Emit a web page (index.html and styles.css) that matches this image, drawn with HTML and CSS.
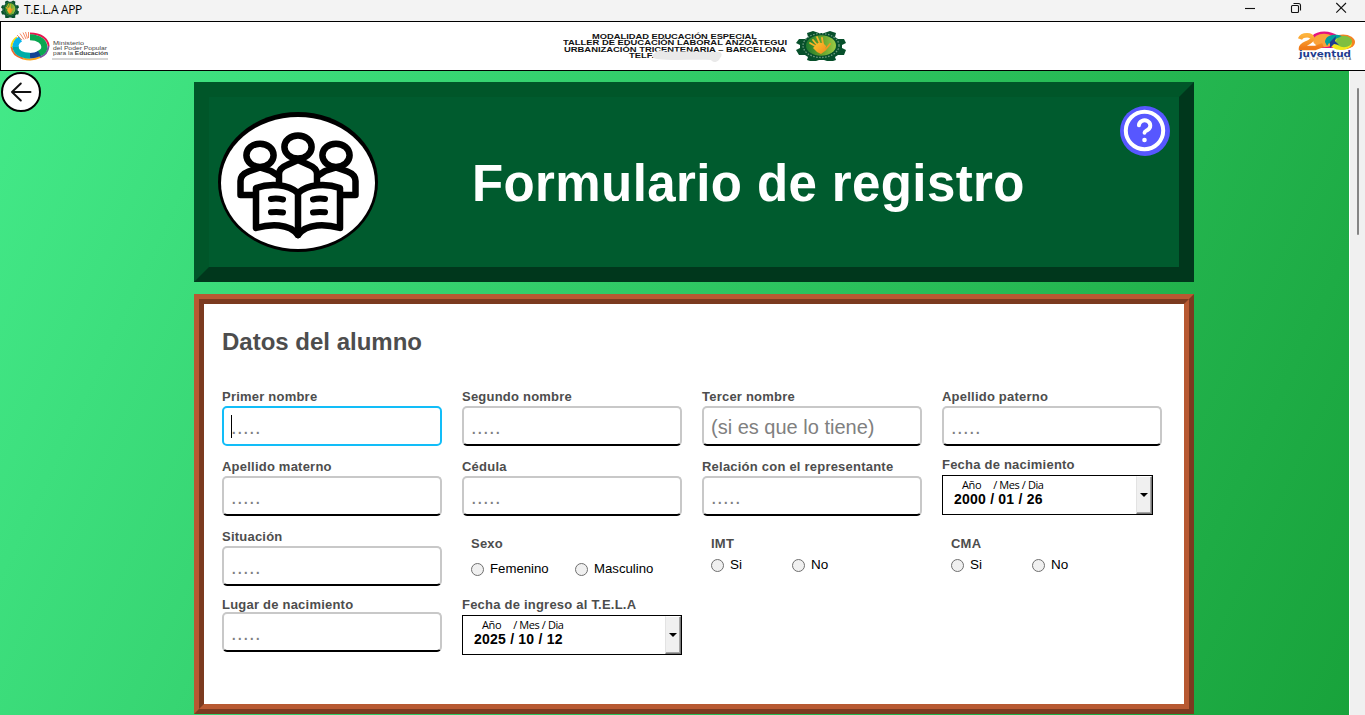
FILE: index.html
```html
<!DOCTYPE html>
<html lang="es">
<head>
<meta charset="utf-8">
<title>T.E.L.A APP</title>
<link rel="stylesheet" href="styles.css">
</head>
<body>
<svg width="0" height="0" class="defs">
  <defs>
    <linearGradient id="gearCore" x1="0" y1="0" x2="1" y2="0"><stop offset="0" stop-color="#1d7a2e"/><stop offset=".5" stop-color="#5f9f2c"/><stop offset="1" stop-color="#9ccb45"/></linearGradient>
    <linearGradient id="handFill" x1="0" y1="0" x2="1" y2="1"><stop offset="0" stop-color="#ffc52d"/><stop offset="1" stop-color="#f08a1d"/></linearGradient>
    <linearGradient id="twoFill" x1="0" y1="0" x2="0" y2="1"><stop offset="0" stop-color="#fdb33c"/><stop offset="1" stop-color="#f07a18"/></linearGradient>
    <symbol id="gear" viewBox="0 0 50 31" preserveAspectRatio="none">
      <path fill="#07502b" d="M17 1l6 2h5l6-2 6 2-1 4 3 2h6l2 4-4 2v3l4 2-2 5h-6l-3 2 1 3-6 2-6-2h-5l-6 2-6-2 1-3-3-2H3l-3-5 4-2v-3l-4-2 3-4h6l3-2-1-4z"/>
      <ellipse cx="25" cy="15.500" rx="18" ry="12" fill="none" stroke="#d9e8dc" stroke-width="1.300" stroke-dasharray="1.500 1.500" stroke-opacity=".5"/>
      <ellipse cx="25" cy="15.500" rx="15" ry="10.300" fill="url(#gearCore)"/>
      <path fill="none" stroke="url(#handFill)" stroke-width="1.800" stroke-linecap="round" d="M21 17l-7-4M22 16l-5-6M24 14l-3-7M27 14l-1-6M29 20l5-6"/>
      <path fill="url(#handFill)" d="M19 16l3-3 5 0 3 3-1 5-4 3-4-2-4-4z"/>
    </symbol>
  </defs>
</svg>

<header class="titlebar">
  <svg class="titlebar-icon" width="18" height="18"><use href="#gear" width="18" height="18"/></svg>
  <span class="titlebar-name">T.E.L.A APP</span>
  <div class="window-buttons">
    <svg width="12" height="12" viewBox="0 0 12 12"><path d="M1 6.500h10"/></svg>
    <svg width="12" height="12" viewBox="0 0 12 12"><rect x="1.500" y="3.500" width="7" height="7" rx="1"/><path d="M3.500 1.500h5a2 2 0 0 1 2 2v5"/></svg>
    <svg width="12" height="12" viewBox="0 0 12 12"><path d="M1.300 1l9.700 9.700M11 1L1.300 10.700"/></svg>
  </div>
</header>

<div class="brandbar">
  <svg class="ministry" width="100" height="32" viewBox="0 0 100 32">
    <g fill="none">
      <path stroke="#e6174f" stroke-width="2" d="M20 2.600C31 2.600 38 8 38.600 15"/>
      <path stroke="#7c52a0" stroke-width="2" d="M38.600 15C38 20 35 24.500 30 26.200"/>
      <path stroke="#f9a51b" stroke-width="2" d="M30 26.200C25 28.700 18 28.700 13 27.500"/>
      <path stroke="#ef6b2e" stroke-width="2" d="M13 27.500C6 25.500 2 21 1.500 16"/>
      <path stroke="#f5dc14" stroke-width="2" d="M1.500 16C1.500 12 4 8 7 6.500"/>
      <path stroke="#0aa651" stroke-width="6" d="M20 6.200C29 6.200 34 11 34.300 15.500S31 22 28 23"/>
      <path stroke="#124494" stroke-width="5.500" d="M29.500 22.500C26 24.300 23 24.700 20 24.800"/>
      <path stroke="#00ada7" stroke-width="6" d="M20 24.700C11 24.700 5.500 21 5.500 15"/>
      <path stroke="#08b5ea" stroke-width="6" d="M5.500 16C5.500 12 7 10 10.500 8"/>
      <path stroke="#f26a3d" stroke-width=".8" d="M7 4l5 5M10 2.500l4 6M13 1.500l3 6.500M15.500 1l2 6.500M18.500 1v6"/>
    </g>
    <g class="ministry-text">
      <text x="43" y="14" textLength="31" lengthAdjust="spacingAndGlyphs">Ministerio</text>
      <text x="43" y="19" textLength="54" lengthAdjust="spacingAndGlyphs">del Poder Popular</text>
      <text x="43" y="24" textLength="55" lengthAdjust="spacingAndGlyphs">para la <tspan class="strong">Educación</tspan></text>
    </g>
    <path d="M42 28h56" stroke="#999" stroke-width=".8"/>
  </svg>
  <div class="school">
    <svg width="226" height="32" viewBox="0 0 226 32" class="school-text">
      <text x="29" y="8.500" textLength="165" lengthAdjust="spacingAndGlyphs">MODALIDAD EDUCACIÓN ESPECIAL</text>
      <text x="0" y="15.200" textLength="224" lengthAdjust="spacingAndGlyphs">TALLER DE EDUCACIÓN LABORAL ANZOÁTEGUI</text>
      <text x="1" y="21.500" textLength="222" lengthAdjust="spacingAndGlyphs">URBANIZACIÓN TRICENTENARIA – BARCELONA</text>
      <text x="66" y="28.200" textLength="25" lengthAdjust="spacingAndGlyphs">TELF.</text>
      <path fill="#e9e9e9" d="M92 23c3-3 7-3 11-1 16-1 34 0 50 0 6-1 7 3 4 6-2 5-7 5-9 2-18-1-37 1-54-1-6-1-6-4-2-6z"/>
    </svg>
    <svg width="50" height="31"><use href="#gear" width="50" height="31"/></svg>
  </div>
  <svg class="juventud" width="60" height="30" viewBox="0 0 60 30">
    <path fill="#e5137f" d="M15 5C20-1 34-1 41 5l-4 12H22z"/>
    <ellipse cx="27" cy="9.500" rx="11" ry="6.800" fill="#faa33a"/>
    <path fill="none" stroke="url(#twoFill)" stroke-width="4.500" d="M3 8C5 3 16 3 15 8c-1 4-11 5-11 9h14l8-3"/>
    <ellipse cx="46" cy="11" rx="12" ry="7.500" fill="#f58220"/>
    <ellipse cx="44" cy="12" rx="11" ry="7" fill="#f3e91c"/>
    <ellipse cx="47" cy="10.500" rx="8" ry="5.800" fill="#80bf40"/>
    <path fill="#009f9c" d="M28 11c0-7 10-9 17-6l-6 3-4 6-3-2-2 3z"/>
    <path fill="#203b8e" d="M33 11l3-3 3-3-1 5 4 4-5-1-4 4z"/>
    <text class="juventud-name" x="2" y="25.500" textLength="52" lengthAdjust="spacingAndGlyphs">juventud</text>
    <text class="juventud-sub" x="8" y="28.600" textLength="46">BICENTENARIA</text>
  </svg>
</div>

<div class="viewport">
  <button class="back" aria-label="Volver">
    <svg width="36" height="36" viewBox="0 0 36 36"><path d="M27.500 18H9M17.800 9.500L9 18l8.800 8.500"/></svg>
  </button>
  <main class="page">
    <section class="banner">
      <svg class="banner-logo" width="160" height="140" viewBox="0 0 160 140">
        <ellipse cx="80" cy="70" rx="80" ry="70" fill="#000"/>
        <ellipse cx="80" cy="71" rx="77" ry="66" fill="#fff"/>
        <g fill="none" stroke="#000" stroke-width="6.500" stroke-linejoin="round" stroke-linecap="round">
          <path d="M35 83H22.500V69c0-5 3-7.500 8-9.500L42 55.500 53 59l6 4M125 83h12.500V69c0-5-3-7.500-8-9.500L118 55.500 107 59l-6 4"/>
          <ellipse cx="42" cy="43.300" rx="13.600" ry="11.600"/>
          <ellipse cx="118" cy="43.300" rx="13.600" ry="11.600"/>
          <path fill="#fff" d="M61 74V62c0-4 3-7 8-9l11-5 11 5c5 2 8 5 8 9v12"/>
          <ellipse cx="80" cy="35" rx="13.600" ry="11.600"/>
          <path fill="#fff" d="M38 76c14-5 32-4 42 5 10-9 28-10 42-5v40c-14-4-33-5-42 7-9-12-28-11-42-7z"/>
          <path d="M80 81v42"/>
          <path stroke-width="6" d="M53 87q6-1 12 .5M53 100.300q6-.8 12 .2M95 87.500q6-1.500 12-.5M95 100.500q6-1 12-.2"/>
        </g>
      </svg>
      <h1 class="banner-title">Formulario de registro</h1>
      <svg class="help" width="50" height="50" viewBox="0 0 50 50">
        <circle cx="25" cy="25" r="25" fill="#5757ff"/>
        <circle cx="24.500" cy="24.500" r="18.700" fill="none" stroke="#fff" stroke-width="4"/>
        <path d="M18.900 19.400a5.700 5.200 0 1 1 8.700 4.600c-2 1.200-3.100 1.300-3.100 2.700" fill="none" stroke="#fff" stroke-width="3.900" stroke-linecap="round"/>
        <circle cx="24.500" cy="34" r="2.300" fill="#fff"/>
      </svg>
    </section>

    <section class="frame">
      <form class="panel">
        <h2 class="panel-title">Datos del alumno</h2>
        <div class="fields">
          <label class="field"><span class="caption">Primer nombre</span><span class="box focused"><i class="caret"></i><span class="dots">.....</span></span></label>
          <label class="field"><span class="caption">Segundo nombre</span><span class="box"><span class="dots">.....</span></span></label>
          <label class="field"><span class="caption">Tercer nombre</span><span class="box">(si es que lo tiene)</span></label>
          <label class="field"><span class="caption">Apellido paterno</span><span class="box"><span class="dots">.....</span></span></label>

          <label class="field"><span class="caption">Apellido materno</span><span class="box"><span class="dots">.....</span></span></label>
          <label class="field"><span class="caption">Cédula</span><span class="box"><span class="dots">.....</span></span></label>
          <label class="field"><span class="caption">Relación con el representante</span><span class="box"><span class="dots">.....</span></span></label>
          <div class="field raised"><span class="caption">Fecha de nacimiento</span>
            <div class="date narrow"><div class="date-text"><span class="date-head"><span>Año</span><span>/ Mes / Dia</span></span><b>2000 / 01 / 26</b></div><span class="drop"></span></div>
          </div>

          <label class="field"><span class="caption">Situación</span><span class="box"><span class="dots">.....</span></span></label>
          <div class="field choice sex"><span class="caption">Sexo</span><div class="options"><label><i class="radio"></i>Femenino</label><label><i class="radio"></i>Masculino</label></div></div>
          <div class="field choice"><span class="caption">IMT</span><div class="options"><label><i class="radio"></i>Si</label><label><i class="radio"></i>No</label></div></div>
          <div class="field choice"><span class="caption">CMA</span><div class="options"><label><i class="radio"></i>Si</label><label><i class="radio"></i>No</label></div></div>

          <label class="field birthplace"><span class="caption">Lugar de nacimiento</span><span class="box"><span class="dots">.....</span></span></label>
          <div class="field raised"><span class="caption">Fecha de ingreso al T.E.L.A</span>
            <div class="date"><div class="date-text"><span class="date-head"><span>Año</span><span>/ Mes / Dia</span></span><b>2025 / 10 / 12</b></div><span class="drop"></span></div>
          </div>
        </div>
      </form>
    </section>
  </main>
  <div class="scrollbar"><div class="thumb"></div></div>
</div>
</body>
</html>
```

FILE: styles.css
```css
* { box-sizing: border-box; }
body {
  margin: 0;
  width: 1365px;
  height: 715px;
  overflow: hidden;
  display: flex;
  flex-direction: column;
  font-family: "Liberation Sans", Arial, sans-serif;
  color: #000;
}
.defs { position: absolute; }

.titlebar {
  flex: none;
  height: 21px;
  display: flex;
  align-items: flex-start;
  gap: 5px;
  padding-left: 1px;
  background: #f3f3f3;
}
.titlebar-name {
  font: 12px/19px "Open Sans", "Noto Sans", sans-serif;
  letter-spacing: -0.35px;
}
.window-buttons {
  margin-left: auto;
  display: flex;
  gap: 33.5px;
  padding: 2px 18px 0 0;
}
.window-buttons svg { fill: none; stroke: #111; stroke-width: 1.1; }

.brandbar {
  flex: none;
  height: 50px;
  display: grid;
  grid-template-columns: 552px 1fr 68px;
  align-items: start;
  border: 1px solid #000;
  border-right: 0;
  background: #fff;
}
.ministry { margin: 9px 0 0 9px; }
.ministry-text { font-size: 5.8px; fill: #444; }
.strong { font-weight: bold; }
.school { display: flex; gap: 7px; padding: 8px 0 0 10px; }
.school-text { font-size: 6.8px; font-weight: bold; fill: #111; }
.juventud { margin: 9px 0 0; }
.juventud-name { font: bold 8.500px "DejaVu Sans", sans-serif; fill: #203b8e; }
.juventud-sub { font-size: 3px; fill: #333; }

.viewport {
  flex: 1;
  position: relative;
  display: flex;
  background: linear-gradient(115deg, #43e988 0%, #18a23a 100%);
}
.back {
  position: absolute;
  left: 1px;
  top: 1px;
  width: 40px;
  height: 40px;
  padding: 0;
  border: 2px solid #000;
  border-radius: 50%;
  background: #fff;
}
.back svg { display: block; fill: none; stroke: #111; stroke-width: 2; stroke-linecap: round; stroke-linejoin: round; }
.page {
  flex: 1;
  display: flex;
  flex-direction: column;
  gap: 12px;
  padding: 11px 0 0 194px;
}
.scrollbar {
  width: 16px;
  padding: 17px 0 0 7px;
  border-left: 1px solid #fff;
  background: #f0f0f0;
}
.thumb { width: 2px; height: 147px; border-radius: 1px; background: #858585; }

.banner {
  width: 1000px;
  height: 200px;
  display: flex;
  align-items: flex-start;
  padding: 15px 9px 0 9px;
  border: 15px solid;
  border-color: #005629 #00371c #00371c #005629;
  background: #005b2e;
}
.banner-logo { flex: none; }
.banner-title {
  margin: 43px 0 0 94px;
  font-size: 51px;
  line-height: 58px;
  letter-spacing: 0.4px;
  color: #fff;
}
.help { margin: -6px 0 0 auto; }

.frame {
  width: 1000px;
  height: 420px;
  border: 5px solid;
  border-color: #b85932 #7b3a20 #7b3a20 #b85932;
}
.panel {
  height: 410px;
  padding: 24px 0 0 18px;
  border: 5px solid;
  border-color: #7b3a20 #b85932 #b85932 #7b3a20;
  background: #fff;
}
.panel-title {
  margin: 0 0 34px;
  font-size: 24px;
  line-height: 28px;
  color: #4d4d4d;
}
.fields {
  display: grid;
  grid-template-columns: repeat(4, 240px);
  grid-auto-rows: 70px;
}
.field { display: flex; flex-direction: column; }
.caption {
  height: 16px;
  font-size: 13px;
  line-height: 13px;
  font-weight: bold;
  letter-spacing: 0.22px;
  color: #4d4d4d;
}
.box {
  position: relative;
  display: flex;
  align-items: center;
  width: 220px;
  height: 40px;
  padding: 2px 0 0 7px;
  border: 2px solid #c8c8c8;
  border-bottom-color: #000;
  border-radius: 5px;
  font-size: 20px;
  color: #808080;
}
.focused { border-color: #12bdf8; }
.dots { letter-spacing: 0.44px; }
.caret { position: absolute; left: 7px; top: 7px; width: 1px; height: 23px; background: #000; }

.raised { margin-top: -2px; }
.raised .caption { height: 17px; }
.birthplace { margin-top: -2px; }
.birthplace .caption { height: 14px; }
.date {
  display: flex;
  justify-content: space-between;
  width: 220px;
  height: 40px;
  border: 1px solid #000;
  background: #fff;
}
.narrow { width: 211px; }
.date-text {
  display: flex;
  flex-direction: column;
  padding: 2px 0 0 11px;
  font-size: 14px;
  line-height: 17px;
  letter-spacing: 0.22px;
}
.date-head {
  display: flex;
  gap: 12px;
  padding-left: 8px;
  font: 11px/13px "Open Sans", "Noto Sans", sans-serif;
  letter-spacing: -0.4px;
}
.drop {
  display: flex;
  align-items: center;
  justify-content: center;
  width: 16px;
  border: 1px solid;
  border-color: #fff #777 #777 #e3e3e3;
  box-shadow: inset -1px -1px #a5a5a5;
  background: #f0f0f0;
}
.drop::before {
  content: "";
  border: 4px solid transparent;
  border-top-color: #000;
  border-bottom: 0;
}
.choice { padding: 7px 0 0 9px; }
.options { display: flex; padding-top: 5px; }
.options label {
  display: flex;
  align-items: center;
  gap: 6px;
  width: 81px;
  font-size: 13.5px;
  line-height: 14px;
}
.sex .options { padding-top: 9px; }
.sex .options label { width: 104px; font-size: 13.2px; }
.radio {
  flex: none;
  width: 13px;
  height: 13px;
  border: 1px solid #6f6f6f;
  border-radius: 50%;
  background: #f0f0f0;
}
```
